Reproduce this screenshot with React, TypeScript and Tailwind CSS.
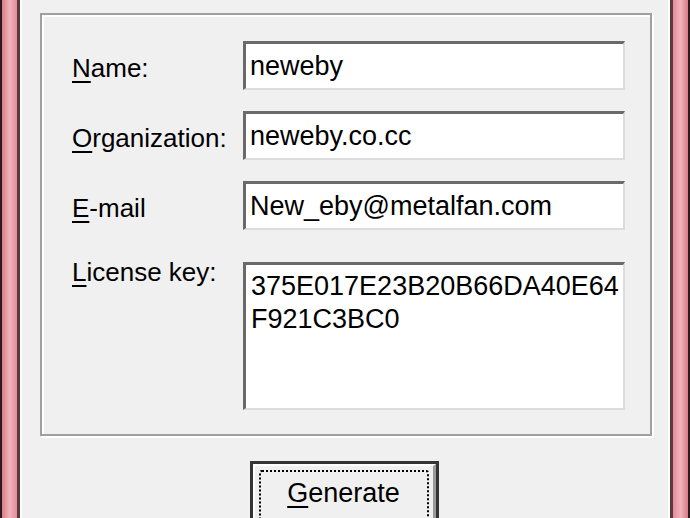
const FONT = "font-['Liberation_Sans',Arial,sans-serif]"

function Field({ value }: { value: string }) {
  return (
    <div className="flex h-[49px] w-[382px] items-center border-t-[3px] border-l-[3px] border-b-2 border-r-2 border-t-[#6a6a6a] border-l-[#6a6a6a] border-b-[#dcdcdc] border-r-[#dcdcdc] bg-white pl-[4px] text-[27px] text-black">
      {value}
    </div>
  )
}

function Label({ hot, rest }: { hot: string; rest: string }) {
  return (
    <span className="w-[171px] shrink-0 pt-[5px] text-[26px] leading-[31px] text-black">
      <u className="decoration-2 underline-offset-[4px]">{hot}</u>
      {rest}
    </span>
  )
}

export default function App() {
  return (
    <div className={`flex h-[518px] w-[690px] overflow-hidden bg-[#f0f0f0] ${FONT}`}>
      {/* left window frame */}
      <div className="flex shrink-0">
        <div className="w-[2px] bg-[#2e1a1c]" />
        <div className="w-[15px] bg-gradient-to-r from-[#d97c89] via-[#f2b3bb] to-[#e48d99]" />
        <div className="w-[3px] bg-[#5b3b3e]" />
        <div className="w-[2px] bg-white" />
      </div>

      <div className="flex flex-1 flex-col">
        <div className="mt-[13px] ml-[18px] w-[612px] border-2 border-[#a0a0a0] pt-[26px] pb-[24px] pl-[30px] pr-[25px] shadow-[inset_2px_2px_0_#ffffff,2px_2px_0_#ffffff]">
          <div className="flex flex-col gap-[21px]">
            <div className="flex items-center">
              <Label hot="N" rest="ame:" />
              <Field value="neweby" />
            </div>
            <div className="flex items-center">
              <Label hot="O" rest="rganization:" />
              <Field value="neweby.co.cc" />
            </div>
            <div className="flex items-center">
              <Label hot="E" rest="-mail" />
              <Field value="New_eby@metalfan.com" />
            </div>
          </div>
          <div className="mt-[22px] flex items-start">
            <Label hot="L" rest="icense key:" />
            <div className="mt-[10px] h-[148px] w-[382px] border-t-[3px] border-l-[3px] border-b-2 border-r-2 border-t-[#6a6a6a] border-l-[#6a6a6a] border-b-[#dcdcdc] border-r-[#dcdcdc] bg-white pt-[5px] pl-[5px] text-[27px] leading-[33px] text-black">
              <div>375E017E23B20B66DA40E64</div>
              <div>F921C3BC0</div>
            </div>
          </div>
        </div>

        <div className="mt-[25px] flex justify-center pr-[2px]">
          <button className="h-[70px] w-[189px] border-[3px] border-[#353535] bg-[#f0f0f0] p-0">
            <div className="h-full w-full border-t-2 border-l-2 border-r-[3px] border-b-[3px] border-t-white border-l-white border-r-[#9a9a9a] border-b-[#9a9a9a] p-[4px]">
              <div className="flex h-full w-full justify-center rounded-[3px] border-2 border-dotted border-black pt-[6px] text-[27px] leading-[31px] text-black">
                <span>
                  <u className="decoration-2 underline-offset-[4px]">G</u>enerate
                </span>
              </div>
            </div>
          </button>
        </div>
      </div>

      {/* right window frame */}
      <div className="flex shrink-0">
        <div className="w-[2px] bg-white" />
        <div className="w-[3px] bg-[#5b3b3e]" />
        <div className="w-[15px] bg-gradient-to-r from-[#e48d99] via-[#f2b3bb] to-[#d97c89]" />
        <div className="w-[2px] bg-[#2e1a1c]" />
      </div>
    </div>
  )
}
